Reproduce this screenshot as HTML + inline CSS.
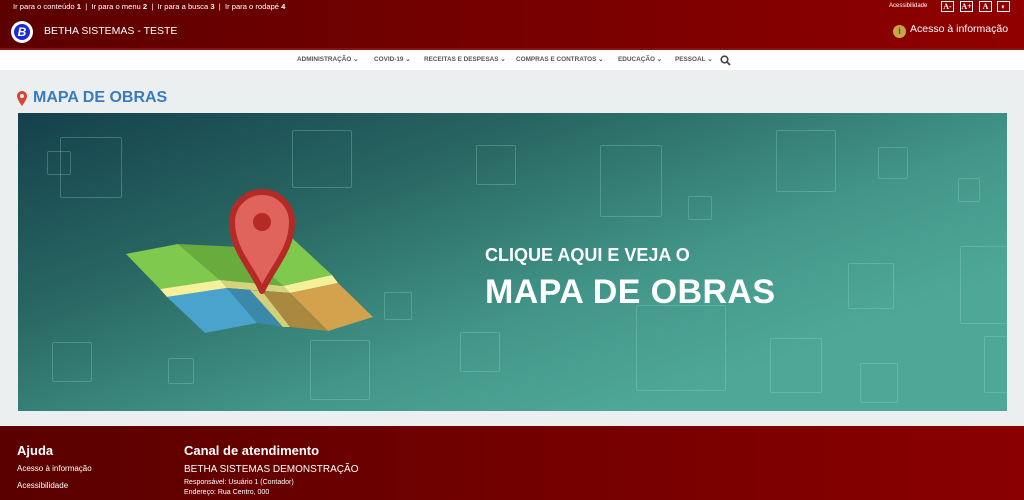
<!DOCTYPE html>
<html><head><meta charset="utf-8"><style>
*{margin:0;padding:0;box-sizing:border-box}
body{width:1024px;height:500px;overflow:hidden;background:#eceff0;font-family:"Liberation Sans",sans-serif;position:relative}
.top{position:absolute;left:0;top:0;width:1024px;height:48px;background:linear-gradient(90deg,#5c0000,#900000)}
.skip{position:absolute;left:13px;top:2px;color:#fff;font-size:7.6px;white-space:nowrap}
.skip b{font-weight:bold}
.logo{position:absolute;left:11px;top:21px;width:22px;height:22px;border-radius:50%;background:#fff}
.logo div{position:absolute;left:3px;top:3px;width:16px;height:16px;border-radius:50%;background:#1a2bd6;color:#fff;font-weight:bold;font-style:italic;font-size:12px;text-align:center;line-height:16px}
.brand{position:absolute;left:44px;top:25px;color:#fff;font-size:10.5px}
.acc{position:absolute;left:889px;top:3px;color:#fff;font-size:6px}
.box{position:absolute;top:1px;width:13px;height:11px;border:1px solid #fff;color:#fff;font-size:8px;font-family:"Liberation Serif",serif;font-weight:bold;text-align:center;line-height:9px}
.info{position:absolute;left:893px;top:23px;color:#fff;font-size:10.5px}
.info span{display:inline-block;width:13px;height:13px;border-radius:50%;background:#c8a54a;color:#2a6a1a;font-size:9px;font-weight:bold;text-align:center;line-height:13px;margin-right:4px;vertical-align:-2px}
.nav{position:absolute;left:0;top:48px;width:1024px;height:22px;background:#fff;border-top:2px solid #8a1010}
.nav span{position:absolute;top:5px;font-size:6.4px;color:#555;white-space:nowrap;font-weight:bold}
h1{position:absolute;left:33px;top:89px;color:#3a7bbf;font-size:16px;font-weight:bold}
.banner{position:absolute;left:18px;top:113px;width:989px;height:298px;background:linear-gradient(160deg,#14404c 0%,#286662 30%,#43978a 60%,#4fa897 80%);overflow:hidden}
.sq{position:absolute;border:1px solid rgba(150,220,200,0.3);border-radius:2px}
.t1{position:absolute;left:467px;top:132px;color:#fff;font-size:18px;font-weight:bold}
.t2{position:absolute;left:467px;top:160px;color:#fff;font-size:34px;font-weight:bold;letter-spacing:0.4px}
.foot{position:absolute;left:0;top:426px;width:1024px;height:74px;background:linear-gradient(90deg,#5a0000,#8a0000)}
.foot div{position:absolute;color:#fff;white-space:nowrap}
</style></head><body>
<div class="top">
 <div class="skip">Ir para o conteúdo <b>1</b> &nbsp;| &nbsp;Ir para o menu <b>2</b> &nbsp;| &nbsp;Ir para a busca <b>3</b> &nbsp;| &nbsp;Ir para o rodapé <b>4</b></div>
 <div class="logo"><div>B</div></div>
 <div class="brand">BETHA SISTEMAS - TESTE</div>
 <div class="acc">Acessibilidade</div>
 <div class="box" style="left:941px">A-</div>
 <div class="box" style="left:960px">A+</div>
 <div class="box" style="left:979px">A</div>
 <div class="box" style="left:997px">◐</div>
 <div class="info"><span>i</span>Acesso à informação</div>
</div>
<div class="nav">
 <span style="left:297px">ADMINISTRAÇÃO ⌄</span>
 <span style="left:374px">COVID-19 ⌄</span>
 <span style="left:424px">RECEITAS E DESPESAS ⌄</span>
 <span style="left:516px">COMPRAS E CONTRATOS ⌄</span>
 <span style="left:618px">EDUCAÇÃO ⌄</span>
 <span style="left:675px">PESSOAL ⌄</span>
 <svg style="position:absolute;left:720px;top:5px" width="11" height="11" viewBox="0 0 11 11"><circle cx="4.5" cy="4.5" r="3.3" fill="none" stroke="#444" stroke-width="1.6"/><line x1="7" y1="7" x2="10" y2="10" stroke="#444" stroke-width="1.8"/></svg>
</div>
<svg style="position:absolute;left:17px;top:91px" width="10" height="15" viewBox="0 0 10 15"><path d="M5 0C2.2 0 0 2.2 0 5c0 3.5 5 10 5 10s5-6.5 5-10C10 2.2 7.8 0 5 0z" fill="#d9453a"/><circle cx="5" cy="5" r="2" fill="#eceff0"/></svg>
<h1>MAPA DE OBRAS</h1>
<div class="banner">
 <div class="sq" style="left:29px;top:38px;width:24px;height:24px"></div>
 <div class="sq" style="left:42px;top:24px;width:62px;height:61px"></div>
 <div class="sq" style="left:274px;top:17px;width:60px;height:58px"></div>
 <div class="sq" style="left:458px;top:32px;width:40px;height:40px"></div>
 <div class="sq" style="left:582px;top:32px;width:62px;height:72px"></div>
 <div class="sq" style="left:670px;top:83px;width:24px;height:24px"></div>
 <div class="sq" style="left:758px;top:17px;width:60px;height:62px"></div>
 <div class="sq" style="left:860px;top:34px;width:30px;height:32px"></div>
 <div class="sq" style="left:940px;top:65px;width:22px;height:24px"></div>
 <div class="sq" style="left:366px;top:179px;width:28px;height:28px"></div>
 <div class="sq" style="left:442px;top:219px;width:40px;height:40px"></div>
 <div class="sq" style="left:292px;top:227px;width:60px;height:60px"></div>
 <div class="sq" style="left:34px;top:229px;width:40px;height:40px"></div>
 <div class="sq" style="left:150px;top:245px;width:26px;height:26px"></div>
 <div class="sq" style="left:618px;top:192px;width:90px;height:86px"></div>
 <div class="sq" style="left:830px;top:150px;width:46px;height:46px"></div>
 <div class="sq" style="left:942px;top:133px;width:60px;height:78px"></div>
 <div class="sq" style="left:752px;top:225px;width:52px;height:55px"></div>
 <div class="sq" style="left:842px;top:250px;width:38px;height:40px"></div>
 <div class="sq" style="left:966px;top:223px;width:30px;height:57px"></div>
 <svg style="position:absolute;left:-18px;top:-113px" width="1024" height="500">
  <polygon points="126,254 178,244 220,280 160,289" fill="#7fc94e"/>
  <polygon points="160,289 220,280 227,288 167,297" fill="#f6f09a"/>
  <polygon points="167,297 227,288 257,323 205,333" fill="#4aa3cc"/>
  <polygon points="178,244 240,247 283,286 220,280" fill="#6aab3e"/>
  <polygon points="220,280 283,286 290,293 227,288" fill="#d6d47a"/>
  <polygon points="227,288 290,293 283,327 257,323" fill="#3b88ab"/>
  <polygon points="250,290 262,291 290,327 283,327" fill="#d4d07a"/>
  <polygon points="240,247 292,238 332,275 283,286" fill="#7fc94e"/>
  <polygon points="283,286 332,275 338,283 290,293" fill="#f6f09a"/>
  <polygon points="290,293 338,283 373,317 328,331" fill="#d3a24c"/>
  <polygon points="262,291 290,293 328,331 290,327" fill="#a98940"/>
  <path d="M262 291 C252 268 232 250 232 222 A30 30 0 0 1 292 222 C292 250 272 268 262 291 Z" fill="#e0645c" stroke="#b52a25" stroke-width="6" stroke-linejoin="round"/>
  <circle cx="262" cy="222" r="9" fill="#b52a25"/>
 </svg>
 <div class="t1">CLIQUE AQUI E VEJA O</div>
 <div class="t2">MAPA DE OBRAS</div>
</div>
<div class="foot">
 <div style="left:17px;top:17px;font-size:13px;font-weight:bold">Ajuda</div>
 <div style="left:17px;top:38px;font-size:8px">Acesso à informação</div>
 <div style="left:17px;top:55px;font-size:8px">Acessibilidade</div>
 <div style="left:184px;top:17px;font-size:13px;font-weight:bold">Canal de atendimento</div>
 <div style="left:184px;top:38px;font-size:10px">BETHA SISTEMAS DEMONSTRAÇÃO</div>
 <div style="left:184px;top:53px;font-size:7px">Responsável: Usuário 1 (Contador)</div>
 <div style="left:184px;top:63px;font-size:7px">Endereço: Rua Centro, 000</div>
</div>
</body></html>
